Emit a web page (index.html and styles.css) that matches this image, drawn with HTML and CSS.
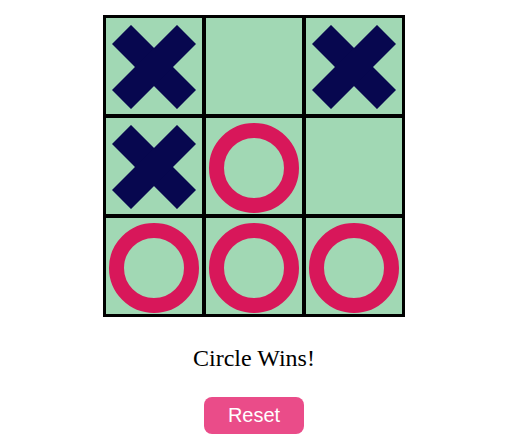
FILE: index.html
```html
<!DOCTYPE html>
<html>
<head>
<meta charset="utf-8">
<link rel="stylesheet" href="styles.css">
</head>
<body>
<div class="app">
  <div class="board">
    <div class="cell"><svg class="x" viewBox="0 0 84 84"><g transform="rotate(45 42 42)"><rect x="-4" y="28.5" width="92" height="27"/><rect x="28.5" y="-4" width="27" height="92"/></g></svg></div>
    <div class="cell"></div>
    <div class="cell"><svg class="x" viewBox="0 0 84 84"><g transform="rotate(45 42 42)"><rect x="-4" y="28.5" width="92" height="27"/><rect x="28.5" y="-4" width="27" height="92"/></g></svg></div>
    <div class="cell"><svg class="x" viewBox="0 0 84 84"><g transform="rotate(45 42 42)"><rect x="-4" y="28.5" width="92" height="27"/><rect x="28.5" y="-4" width="27" height="92"/></g></svg></div>
    <div class="cell"><div class="o"></div></div>
    <div class="cell"></div>
    <div class="cell"><div class="o"></div></div>
    <div class="cell"><div class="o"></div></div>
    <div class="cell"><div class="o"></div></div>
  </div>
  <p class="status">Circle Wins!</p>
  <button class="reset">Reset</button>
</div>
</body>
</html>
```

FILE: styles.css
```css
html, body {
  margin: 0;
  padding: 0;
  background: #ffffff;
}
.app {
  width: 508px;
  padding-top: 15px;
  display: flex;
  flex-direction: column;
  align-items: center;
}
.board {
  display: grid;
  grid-template-columns: repeat(3, 100px);
  grid-template-rows: repeat(3, 100px);
  border: 1px solid #000;
}
.cell {
  box-sizing: border-box;
  width: 100px;
  height: 100px;
  border: 2px solid #000;
  background: #a1d8b4;
  display: flex;
  align-items: center;
  justify-content: center;
}
.x {
  width: 84px;
  height: 84px;
  fill: #07074f;
  margin-top: 2px;
}
.o {
  width: 60px;
  height: 60px;
  border: 15px solid #d8175a;
  border-radius: 50%;
  margin-top: 4px;
}
.status {
  font-family: "Liberation Serif", "Times New Roman", serif;
  font-size: 24px;
  line-height: 28px;
  margin: 27px 0 0 0;
  color: #000;
}
.reset {
  margin-top: 25px;
  width: 100px;
  height: 37px;
  border: none;
  border-radius: 8px;
  background: #ea4c89;
  color: #fff;
  font-family: "Liberation Sans", Arial, sans-serif;
  font-size: 20px;
  padding: 0;
}
```
